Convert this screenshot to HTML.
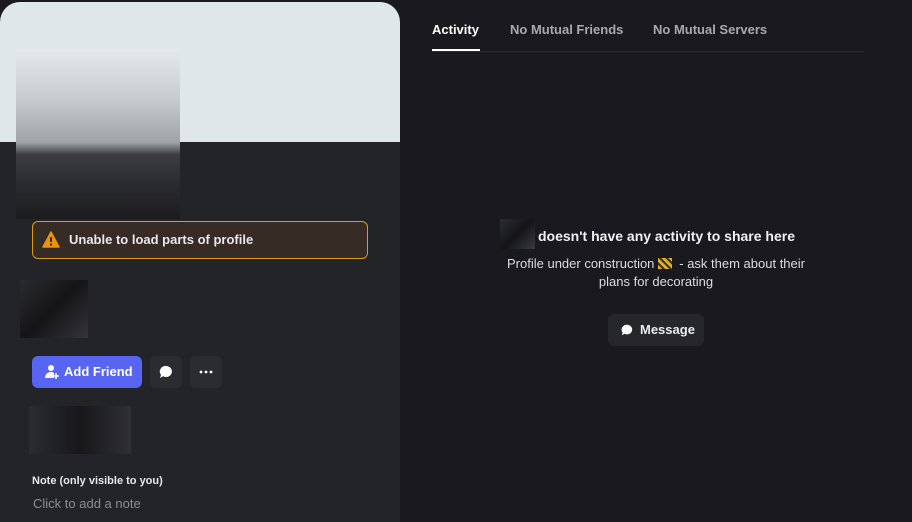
<!DOCTYPE html>
<html><head><style>
*{margin:0;padding:0;box-sizing:border-box}
body{width:912px;height:520px;background:#1a1a1e;font-family:"Liberation Sans",sans-serif;position:relative;overflow:hidden}
.left{position:absolute;left:0;top:2px;width:400px;height:520px;background:#232428;border-radius:20px 20px 0 0;overflow:hidden}
.banner{position:absolute;left:0;top:0;width:400px;height:140px;background:#dfe7e8}
.av{position:absolute;left:16px;top:47px;width:164px;height:170px;background:linear-gradient(#e4eaeb 0%,#c6cbcd 30%,#9fa3a6 55%,#3c3d40 62%,#2a2b2e 80%,#1c1c1f 100%)}
.warn{position:absolute;left:32px;top:221px;width:336px;height:38px;border:1px solid #e19a14;border-radius:6px;background:#372c25;color:#e8e8ea;font-size:13px;font-weight:bold;line-height:36px;padding-left:36px}
.pix1{position:absolute;left:20px;top:280px;width:68px;height:58px;background:linear-gradient(135deg,#2a2b2e,#151517 50%,#34353a)}
.pix2{position:absolute;left:29px;top:406px;width:102px;height:48px;background:linear-gradient(90deg,#2b2c30,#18181b 50%,#2f3035)}
.btn{position:absolute;top:356px;height:32px;border-radius:6px}
.add{left:32px;width:110px;background:#5865f2;color:#fff;font-size:13px;font-weight:bold;line-height:32px;padding-left:32px}
.ib{width:32px;background:#2b2c31}
.t{position:absolute;font-size:14px;font-weight:bold}
</style></head><body>
<div class="left">
<div class="banner"></div>
<div class="av"></div>
</div>
<div class="warn"><svg style="position:absolute;left:9px;top:9px" width="18" height="17" viewBox="0 0 18 17"><path d="M9 1L17 16H1Z" fill="#e8920f" stroke="#e8920f" stroke-linejoin="round" stroke-width="1.5"/><rect x="8" y="6" width="2" height="5" fill="#372c25"/><rect x="8" y="12.5" width="2" height="2" fill="#372c25"/></svg>Unable to load parts of profile</div>
<div class="pix1"></div>
<div class="btn add"><svg style="position:absolute;left:12px;top:8px" width="16" height="16" viewBox="0 0 16 16"><circle cx="7" cy="4" r="3" fill="#fff"/><path d="M1 14c0-4 3-6 6-6 2 0 3 1 3 1v5z" fill="#fff"/><path d="M12 9v6M9 12h6" stroke="#fff" stroke-width="1.6"/></svg>Add Friend</div>
<div class="btn ib" style="left:150px"><svg style="position:absolute;left:8px;top:8px" width="16" height="16" viewBox="0 0 16 16"><path d="M8 2a6 5.5 0 1 1-3 10.3L2 14l1-3.2A6 5.5 0 0 1 8 2z" fill="#fff"/></svg></div>
<div class="btn ib" style="left:190px"><svg style="position:absolute;left:8px;top:8px" width="16" height="16" viewBox="0 0 16 16"><circle cx="3" cy="8" r="1.4" fill="#fff"/><circle cx="8" cy="8" r="1.4" fill="#fff"/><circle cx="13" cy="8" r="1.4" fill="#fff"/></svg></div>
<div class="pix2"></div>
<div style="position:absolute;left:32px;top:475px;color:#e8e8ea;font-size:11px;font-weight:bold">Note (only visible to you)</div>
<div style="position:absolute;left:33px;top:496px;color:#8c8e94;font-size:13px">Click to add a note</div>

<div class="t" style="left:432px;top:22px;color:#fff;font-size:13px">Activity</div>
<div style="position:absolute;left:432px;top:49px;width:48px;height:2px;background:#fff"></div>
<div class="t" style="left:510px;top:22px;color:#a8aab0;font-size:13px">No Mutual Friends</div>
<div class="t" style="left:653px;top:22px;color:#a8aab0;font-size:13px">No Mutual Servers</div>
<div style="position:absolute;left:432px;top:51px;width:432px;height:1px;background:#2a2b30"></div>

<div style="position:absolute;left:500px;top:219px;width:35px;height:30px;background:linear-gradient(135deg,#2c2d31,#151517 50%,#3a3b40)"></div>
<div class="t" style="left:538px;top:228px;color:#f0f0f2">doesn't have any activity to share here</div>
<div style="position:absolute;left:480px;top:255px;width:352px;text-align:center;color:#dcdde0;font-size:13px;line-height:18px">Profile under construction <span style="display:inline-block;width:14px;height:11px;background:repeating-linear-gradient(45deg,#e8b020 0 3px,#333 3px 5px);vertical-align:-1px"></span>&nbsp; - ask them about their<br>plans for decorating</div>
<div style="position:absolute;left:608px;top:314px;width:96px;height:32px;border-radius:6px;background:#26272b;color:#ececee;font-size:13px;font-weight:bold;line-height:32px;padding-left:32px"><svg style="position:absolute;left:12px;top:9px" width="14" height="14" viewBox="0 0 16 16"><path d="M8 2a6 5.5 0 1 1-3 10.3L2 14l1-3.2A6 5.5 0 0 1 8 2z" fill="#fff"/></svg>Message</div>
</body></html>
